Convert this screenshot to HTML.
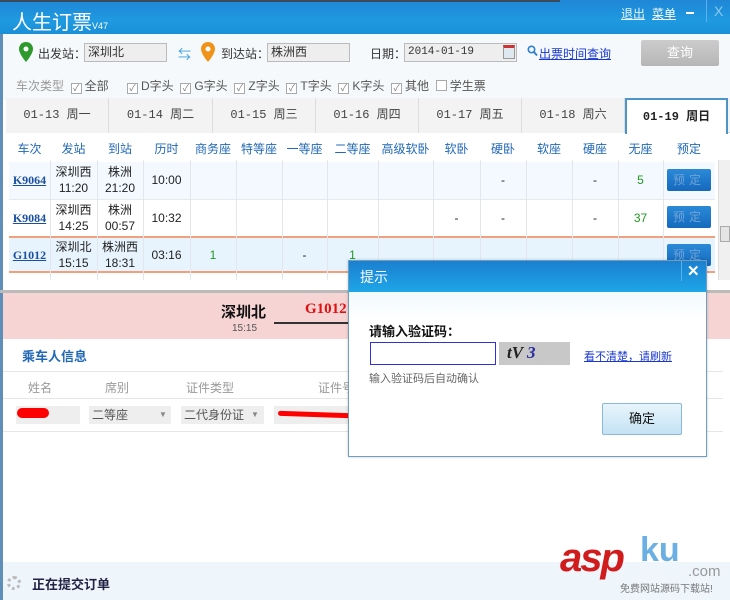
<!DOCTYPE html>
<html><head><meta charset="utf-8">
<style>
*{margin:0;padding:0;box-sizing:border-box}
body{width:730px;height:600px;overflow:hidden;position:relative;background:#fff;font-family:"Liberation Sans","Noto Sans CJK SC",sans-serif;font-size:12px;color:#333}
.a{position:absolute;white-space:nowrap}
.title{left:0;top:0;width:730px;height:34px;background:linear-gradient(180deg,#1f86d6,#1f9ae0 60%,#1a8fd8)}
.inp{background:#eee;border:1px solid #bbb;height:19px;font-size:12px;line-height:17px;padding-left:3px;color:#333}
.cb{display:inline-block;width:11px;height:11px;border:1px solid #aaa;background:#fff;vertical-align:-1px;margin-right:3px;font-size:9px;line-height:9px;text-align:center;color:#777}
.tab{top:98px;height:35px;line-height:35px;text-align:center;background:#f3f3f3;border-right:1px solid #ddd;color:#444;font-family:"Liberation Mono","Noto Sans CJK SC",monospace;font-size:12px}
.th{top:140px;color:#2168b7;font-size:12px;text-align:center}
.row{left:9px;width:706px;}
.cell{text-align:center;font-size:12px;line-height:16px;color:#222}
.vl{position:absolute;width:1px;background:#e3e6ea}
.btn{width:44px;height:22px;background:linear-gradient(#2b8ad8,#1569bd);border-radius:2px;color:#6fa3d8;text-align:center;line-height:22px;font-size:12px;letter-spacing:4px}
.num{color:#229922}
</style></head><body>
<div class="a title"></div>
<div class="a" style="left:0;top:0;width:560px;height:2px;background:#3b4b5c"></div>
<div class="a" style="left:12px;top:6px;color:#fff;font-size:20px">人生订票<span style="font-size:9px">V47</span></div>
<div class="a" style="left:621px;top:5px;color:#e8f4ff;font-size:12px;text-decoration:underline">退出</div>
<div class="a" style="left:652px;top:5px;color:#fff;font-size:12px;text-decoration:underline">菜单</div>
<div class="a" style="left:686px;top:12px;width:8px;height:2px;background:#fff"></div>
<div class="a" style="left:706px;top:0;width:1px;height:22px;background:#5ab3ec"></div>
<div class="a" style="left:714px;top:3px;color:#8cc8f0;font-size:14px">X</div>

<div class="a" style="left:0;top:34px;width:730px;height:66px;background:#f6f9fb"></div>
<div class="a" style="left:0;top:34px;width:3px;height:566px;background:#5f8fb8"></div>
<svg class="a" style="left:19px;top:42px" width="14" height="20"><path d="M7 0C3 0 0 3 0 7c0 5 7 13 7 13s7-8 7-13c0-4-3-7-7-7z" fill="#2e9a2e"/><circle cx="7" cy="7" r="2.5" fill="#fff"/></svg>
<div class="a" style="left:38px;top:45px;font-size:12px">出发站：</div>
<div class="a inp" style="left:84px;top:43px;width:83px">深圳北</div>
<div class="a" style="left:178px;top:44px;color:#3a9fe0;font-size:13px">⇆</div>
<svg class="a" style="left:201px;top:42px" width="14" height="20"><path d="M7 0C3 0 0 3 0 7c0 5 7 13 7 13s7-8 7-13c0-4-3-7-7-7z" fill="#f0931a"/><circle cx="7" cy="7" r="2.5" fill="#fff"/></svg>
<div class="a" style="left:221px;top:45px">到达站：</div>
<div class="a inp" style="left:267px;top:43px;width:83px">株洲西</div>
<div class="a" style="left:370px;top:45px">日期：</div>
<div class="a inp" style="left:404px;top:43px;width:113px;font-family:'Liberation Mono',monospace;font-size:11px">2014-01-19</div>
<div class="a" style="left:503px;top:45px;width:12px;height:14px;background:#dfe7ef;border:1px solid #999;border-top:3px solid #c33"></div>
<svg class="a" style="left:527px;top:45px" width="11" height="12"><circle cx="4.5" cy="4.5" r="3.2" fill="none" stroke="#2a7fd0" stroke-width="1.6"/><path d="M7 7l3 3.5" stroke="#2a7fd0" stroke-width="1.8"/></svg>
<div class="a" style="left:539px;top:45px;color:#1a38d0;text-decoration:underline">出票时间查询</div>
<div class="a" style="left:641px;top:40px;width:78px;height:26px;background:linear-gradient(#ccc,#b6b6b6);border-radius:2px;color:#fff;text-align:center;line-height:26px;font-size:13px">查询</div>

<div class="a" style="left:16px;top:77px;color:#999">车次类型 &nbsp;<span class="cb">✓</span><span style="color:#555">全部</span></div>
<div class="a" style="left:127px;top:77px;color:#555"><span class="cb">✓</span>D字头 &nbsp;<span class="cb">✓</span>G字头 &nbsp;<span class="cb">✓</span>Z字头 &nbsp;<span class="cb">✓</span>T字头 &nbsp;<span class="cb">✓</span>K字头 &nbsp;<span class="cb">✓</span>其他 &nbsp;<span class="cb"></span>学生票</div>

<div class="a" style="left:6px;top:98px;width:724px;height:35px;background:#f3f3f3;border-bottom:1px solid #cfd8e0"></div>
<div class="a tab" style="left:6px;width:103px">01-13 周一</div>
<div class="a tab" style="left:109px;width:104px">01-14 周二</div>
<div class="a tab" style="left:213px;width:103px">01-15 周三</div>
<div class="a tab" style="left:316px;width:103px">01-16 周四</div>
<div class="a tab" style="left:419px;width:103px">01-17 周五</div>
<div class="a tab" style="left:522px;width:103px">01-18 周六</div>
<div class="a tab" style="left:625px;width:103px;background:#fff;border:2px solid #4d94c8;border-bottom:none;height:36px;font-weight:bold;color:#222">01-19 周日</div>

<div class="a" style="left:6px;top:134px;width:712px;height:28px;background:#fff"></div>
<div class="a th" style="left:9px;width:41px">车次</div>
<div class="a th" style="left:50px;width:47px">发站</div>
<div class="a th" style="left:97px;width:46px">到站</div>
<div class="a th" style="left:143px;width:47px">历时</div>
<div class="a th" style="left:190px;width:46px">商务座</div>
<div class="a th" style="left:236px;width:46px">特等座</div>
<div class="a th" style="left:282px;width:45px">一等座</div>
<div class="a th" style="left:327px;width:51px">二等座</div>
<div class="a th" style="left:378px;width:55px">高级软卧</div>
<div class="a th" style="left:433px;width:47px">软卧</div>
<div class="a th" style="left:480px;width:46px">硬卧</div>
<div class="a th" style="left:526px;width:46px">软座</div>
<div class="a th" style="left:572px;width:46px">硬座</div>
<div class="a th" style="left:618px;width:45px">无座</div>
<div class="a th" style="left:663px;width:52px">预定</div>

<div class="a row" style="top:162px;height:37px;background:#f3f9fe"></div>
<div class="a row" style="top:199px;height:37px;background:#fff;border-top:1px solid #e6eaee"></div>
<div class="a row" style="top:236px;height:37px;background:#e8f4fd;border-top:2px solid #f0a07c;border-bottom:2px solid #f0a07c"></div>
<div class="vl" style="left:50px;top:160px;height:120px"></div><div class="vl" style="left:97px;top:160px;height:120px"></div><div class="vl" style="left:143px;top:160px;height:120px"></div><div class="vl" style="left:190px;top:160px;height:120px"></div><div class="vl" style="left:236px;top:160px;height:120px"></div><div class="vl" style="left:282px;top:160px;height:120px"></div><div class="vl" style="left:327px;top:160px;height:120px"></div><div class="vl" style="left:378px;top:160px;height:120px"></div><div class="vl" style="left:433px;top:160px;height:120px"></div><div class="vl" style="left:480px;top:160px;height:120px"></div><div class="vl" style="left:526px;top:160px;height:120px"></div><div class="vl" style="left:572px;top:160px;height:120px"></div><div class="vl" style="left:618px;top:160px;height:120px"></div><div class="vl" style="left:663px;top:160px;height:120px"></div>

<div class="a cell" style="left:9px;width:41px;top:172px;color:#1b4fa0;font-weight:bold;text-decoration:underline;font-family:'Liberation Serif',serif">K9064</div>
<div class="a cell" style="left:50px;width:47px;top:164px">深圳西<br>11:20</div>
<div class="a cell" style="left:97px;width:46px;top:164px">株洲<br>21:20</div>
<div class="a cell" style="left:143px;width:47px;top:172px">10:00</div>
<div class="a cell" style="left:480px;width:46px;top:172px">-</div>
<div class="a cell" style="left:572px;width:46px;top:172px">-</div>
<div class="a cell num" style="left:618px;width:45px;top:172px">5</div>
<div class="a btn" style="left:667px;top:169px">预定</div>

<div class="a cell" style="left:9px;width:41px;top:210px;color:#1b4fa0;font-weight:bold;text-decoration:underline;font-family:'Liberation Serif',serif">K9084</div>
<div class="a cell" style="left:50px;width:47px;top:202px">深圳西<br>14:25</div>
<div class="a cell" style="left:97px;width:46px;top:202px">株洲<br>00:57</div>
<div class="a cell" style="left:143px;width:47px;top:210px">10:32</div>
<div class="a cell" style="left:433px;width:47px;top:210px">-</div>
<div class="a cell" style="left:480px;width:46px;top:210px">-</div>
<div class="a cell" style="left:572px;width:46px;top:210px">-</div>
<div class="a cell num" style="left:618px;width:45px;top:210px">37</div>
<div class="a btn" style="left:667px;top:206px">预定</div>

<div class="a cell" style="left:9px;width:41px;top:247px;color:#1b4fa0;font-weight:bold;text-decoration:underline;font-family:'Liberation Serif',serif">G1012</div>
<div class="a cell" style="left:50px;width:47px;top:239px">深圳北<br>15:15</div>
<div class="a cell" style="left:97px;width:46px;top:239px">株洲西<br>18:31</div>
<div class="a cell" style="left:143px;width:47px;top:247px">03:16</div>
<div class="a cell num" style="left:190px;width:46px;top:247px">1</div>
<div class="a cell" style="left:282px;width:45px;top:247px">-</div>
<div class="a cell num" style="left:327px;width:51px;top:247px">1</div>
<div class="a btn" style="left:667px;top:244px">预定</div>

<div class="a" style="left:718px;top:160px;width:12px;height:120px;background:#f0f0f0;border-left:1px solid #ddd"></div>
<div class="a" style="left:720px;top:226px;width:10px;height:16px;background:#e4e4e4;border:1px solid #aaa"></div>

<div class="a" style="left:0;top:290px;width:730px;height:3px;background:#bbb"></div>
<div class="a" style="left:3px;top:293px;width:727px;height:46px;background:#f6d4d4"></div>
<div class="a" style="left:221px;top:301px;font-size:15px;font-weight:bold;color:#111">深圳北</div>
<div class="a" style="left:305px;top:301px;font-size:15px;font-weight:bold;color:#e01010;font-family:'Liberation Serif',serif">G1012</div>
<div class="a" style="left:232px;top:323px;font-size:10px;color:#555">15:15</div>
<div class="a" style="left:274px;top:322px;width:80px;height:2px;background:#333"></div>

<div class="a" style="left:22px;top:346px;font-size:13px;font-weight:bold;color:#2168b7">乘车人信息</div>
<div class="a" style="left:3px;top:371px;width:720px;height:1px;background:#e6e6e6"></div>
<div class="a" style="left:28px;top:379px;font-size:12px;color:#999">姓名</div>
<div class="a" style="left:105px;top:379px;font-size:12px;color:#999">席别</div>
<div class="a" style="left:186px;top:379px;font-size:12px;color:#999">证件类型</div>
<div class="a" style="left:318px;top:379px;font-size:12px;color:#999">证件号</div>
<div class="a" style="left:3px;top:398px;width:720px;height:1px;background:#e6e6e6"></div>
<div class="a" style="left:16px;top:406px;width:64px;height:18px;background:#eee"></div>
<div class="a" style="left:17px;top:408px;width:32px;height:10px;background:#f00;border-radius:5px"></div>
<div class="a" style="left:89px;top:406px;width:82px;height:18px;background:#eee;color:#555;line-height:18px;padding-left:3px">二等座<span style="position:absolute;left:70px;font-size:8px;color:#888">▼</span></div>
<div class="a" style="left:181px;top:406px;width:83px;height:18px;background:#eee;color:#555;line-height:18px;padding-left:3px">二代身份证<span style="position:absolute;left:70px;font-size:8px;color:#888">▼</span></div>
<div class="a" style="left:274px;top:406px;width:80px;height:18px;background:#eee"></div>
<div class="a" style="left:278px;top:412px;width:72px;height:5px;background:#f00;border-radius:3px;transform:rotate(2deg)"></div>
<div class="a" style="left:3px;top:431px;width:720px;height:1px;background:#e6e6e6"></div>

<div class="a" style="left:3px;top:562px;width:727px;height:38px;background:#eef5fb"></div>
<div class="a" style="left:7px;top:576px;width:14px;height:14px;border:3px dotted #bbb;border-radius:50%"></div>
<div class="a" style="left:32px;top:574px;font-size:13px;font-weight:bold;color:#224">正在提交订单</div>

<div class="a" style="left:560px;top:536px;font-size:40px;font-weight:bold;font-style:italic;color:#d01c1c;letter-spacing:-2px;font-family:'Liberation Sans',sans-serif">asp</div>
<div class="a" style="left:640px;top:531px;font-size:34px;font-weight:bold;color:#2e8fd8;opacity:.7">ku</div>
<div class="a" style="left:688px;top:563px;font-size:15px;color:#999">.com</div>
<div class="a" style="left:620px;top:580px;font-size:10px;color:#777">免费网站源码下载站!</div>

<div class="a" style="left:348px;top:260px;width:359px;height:197px;border:1px solid #6f9fc0;background:linear-gradient(#e2f3fc,#fff 60px);box-shadow:0 0 3px rgba(0,0,0,.2)"></div>
<div class="a" style="left:349px;top:261px;width:357px;height:31px;background:linear-gradient(#1b7fd0,#1ea6e8)"></div>
<div class="a" style="left:360px;top:267px;color:#fff;font-size:14px">提示</div>
<div class="a" style="left:681px;top:261px;width:1px;height:20px;background:#55b4ec"></div>
<div class="a" style="left:687px;top:262px;color:#fff;font-size:15px;font-weight:bold">✕</div>
<div class="a" style="left:369px;top:321px;font-size:13px;font-weight:bold;color:#111">请输入验证码：</div>
<div class="a" style="left:370px;top:342px;width:126px;height:23px;border:1px solid #3030e0;background:#fff"></div>
<div class="a" style="left:499px;top:342px;width:71px;height:23px;background:#c8c8c8"></div>
<div class="a" style="left:507px;top:343px;font-size:17px;font-style:italic;font-weight:bold;color:#222;font-family:'Liberation Serif',serif">tV <span style="color:#2a2aa0">3</span></div>
<div class="a" style="left:584px;top:348px;color:#1a38d0;text-decoration:underline;font-size:11px">看不清楚，请刷新</div>
<div class="a" style="left:369px;top:370px;color:#666;font-size:11px">输入验证码后自动确认</div>
<div class="a" style="left:602px;top:403px;width:80px;height:32px;border:1px solid #8ab8d8;border-radius:2px;background:linear-gradient(#e8f5fc,#c4e2f4);text-align:center;line-height:30px;font-size:13px;color:#111">确定</div>
</body></html>
